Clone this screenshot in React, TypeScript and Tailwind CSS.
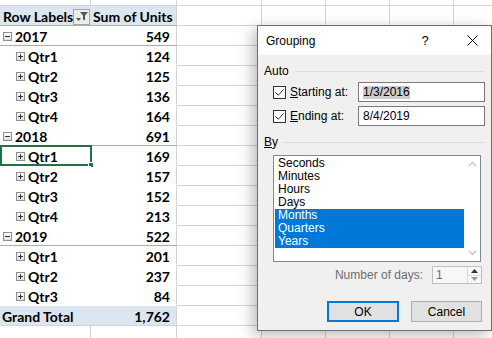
import React from "react";

type Kind = "header" | "year" | "qtr" | "total";

const pivot: { kind: Kind; label: string; value: string; selected?: boolean }[] = [
  { kind: "header", label: "Row Labels", value: "Sum of Units" },
  { kind: "year", label: "2017", value: "549" },
  { kind: "qtr", label: "Qtr1", value: "124" },
  { kind: "qtr", label: "Qtr2", value: "125" },
  { kind: "qtr", label: "Qtr3", value: "136" },
  { kind: "qtr", label: "Qtr4", value: "164" },
  { kind: "year", label: "2018", value: "691" },
  { kind: "qtr", label: "Qtr1", value: "169", selected: true },
  { kind: "qtr", label: "Qtr2", value: "157" },
  { kind: "qtr", label: "Qtr3", value: "152" },
  { kind: "qtr", label: "Qtr4", value: "213" },
  { kind: "year", label: "2019", value: "522" },
  { kind: "qtr", label: "Qtr1", value: "201" },
  { kind: "qtr", label: "Qtr2", value: "237" },
  { kind: "qtr", label: "Qtr3", value: "84" },
  { kind: "total", label: "Grand Total", value: "1,762" },
];

const units = ["Seconds", "Minutes", "Hours", "Days", "Months", "Quarters", "Years"];

function Expander({ open }: { open: boolean }) {
  return (
    <span className="relative flex w-[9px] h-[9px] shrink-0 items-center justify-center border border-[#8f8f8f] bg-linear-to-b from-white to-[#dedede]">
      <span className="absolute w-[5px] h-px bg-[#333]" />
      {!open && <span className="absolute w-px h-[5px] bg-[#333]" />}
    </span>
  );
}

function RestCells() {
  return (
    <>
      <div className="w-[85px] shrink-0 border-r border-b border-[#d4d4d4]" />
      <div className="w-[64px] shrink-0 border-r border-b border-[#d4d4d4]" />
      <div className="w-[64px] shrink-0 border-r border-b border-[#d4d4d4]" />
      <div className="w-[64px] shrink-0 border-r border-b border-[#d4d4d4]" />
      <div className="w-[64px] shrink-0 border-r border-b border-[#d4d4d4]" />
    </>
  );
}

function BlankRow({ h }: { h: string }) {
  return (
    <div className={`flex ${h}`}>
      <div className="w-[91px] shrink-0 border-r border-b border-[#d4d4d4]" />
      <div className="w-[86px] shrink-0 border-r border-b border-[#d4d4d4]" />
      <RestCells />
    </div>
  );
}

function FilterButton() {
  return (
    <span className="ml-auto mr-[1px] flex w-[17px] h-[16px] items-center justify-center border border-[#a5a5a5] bg-[#ececec]">
      <svg width="13" height="11" viewBox="0 0 13 11">
        <path d="M1 7h5l-2.5 3z" fill="#555" />
        <path d="M5 1h8l-3 3.5v5l-2-1v-4z" fill="#555" />
      </svg>
    </span>
  );
}

function PivotRow({ kind, label, value, selected }: { kind: Kind; label: string; value: string; selected?: boolean }) {
  const bottom =
    kind === "header" || kind === "year"
      ? "border-b-[#95b3d7]"
      : kind === "total"
      ? "border-b-[#d4d4d4]"
      : "border-b-white";
  const bg = kind === "header" || kind === "total" ? "bg-[#dce6f1]" : "bg-white";
  return (
    <div className="flex h-[20px]">
      <div className={`relative w-[91px] shrink-0 flex items-center border-b pt-[2px] ${bottom} ${bg}`}>
        {kind === "header" && (
          <>
            <span className="pl-[3px] whitespace-nowrap">{label}</span>
            <FilterButton />
          </>
        )}
        {kind === "year" && (
          <>
            <span className="ml-[3px]"><Expander open /></span>
            <span className="pl-[3px]">{label}</span>
          </>
        )}
        {kind === "qtr" && (
          <>
            <span className="ml-[16px]"><Expander open={false} /></span>
            <span className="pl-[3px]">{label}</span>
          </>
        )}
        {kind === "total" && <span className="pl-[2px] whitespace-nowrap">{label}</span>}
        {selected && (
          <div className="absolute -top-px left-0 -right-px -bottom-px border-2 border-[#217346]">
            <div className="absolute -right-[4px] -bottom-[4px] w-[6px] h-[6px] bg-[#217346] border border-white" />
          </div>
        )}
      </div>
      <div
        className={`w-[86px] shrink-0 flex items-center whitespace-nowrap pt-[2px] border-b border-r border-r-[#d4d4d4] ${bottom} ${bg} ${
          kind === "header" ? "pl-[2px]" : "justify-end pr-[6px]"
        }`}
      >
        {value}
      </div>
      <RestCells />
    </div>
  );
}

function Checkbox() {
  return (
    <span className="flex w-[13px] h-[13px] shrink-0 items-center justify-center border border-[#333] bg-white">
      <svg width="11" height="11" viewBox="0 0 11 11">
        <path d="M1.5 5.5l2.8 2.8L9.5 2.5" fill="none" stroke="#333" strokeWidth="1" />
      </svg>
    </span>
  );
}

function GroupingDialog() {
  return (
    <div
      className="absolute left-[257px] top-[25px] w-[235px] h-[306px] flex flex-col border border-[#6f6f6f] bg-[#f0f0f0] shadow-[-4px_4px_14px_rgba(0,0,0,0.28)] text-[12px] text-black"
      style={{ fontFamily: '"Liberation Sans", Arial, sans-serif' }}
    >
      <div className="h-[29px] shrink-0 flex items-center bg-white pl-[8px]">
        <span>Grouping</span>
        <span className="ml-[106px] text-[13px]">?</span>
        <svg className="ml-[38px]" width="11" height="11" viewBox="0 0 11 11">
          <path d="M0.5 0.5l10 10M10.5 0.5l-10 10" stroke="#000" strokeWidth="1" />
        </svg>
      </div>

      <div className="flex flex-col px-[6px]">
        <div className="mt-[8px] h-[16px] flex items-center">
          <span>Auto</span>
          <span className="ml-[6px] flex-1 h-px bg-[#dcdcdc]" />
        </div>

        <div className="mt-[3px] h-[20px] flex items-center pl-[9px]">
          <Checkbox />
          <span className="ml-[4px]"><u>S</u>tarting at:</span>
          <div className="ml-auto w-[127px] h-[20px] flex items-center border border-[#7a7a7a] bg-white pl-[4px]">
            <span className="bg-[#cccccc] leading-[13px]">1/3/2016</span>
          </div>
        </div>

        <div className="mt-[4px] h-[20px] flex items-center pl-[9px]">
          <Checkbox />
          <span className="ml-[4px]"><u>E</u>nding at:</span>
          <div className="ml-auto w-[127px] h-[20px] flex items-center border border-[#7a7a7a] bg-white pl-[4px]">
            <span>8/4/2019</span>
          </div>
        </div>

        <div className="mt-[8px] h-[16px] flex items-center">
          <span><u>B</u>y</span>
          <span className="ml-[5px] flex-1 h-px bg-[#dcdcdc]" />
        </div>

        <div className="mt-[5px] ml-[9px] w-[208px] h-[107px] flex border border-[#828790] bg-white">
          <div className="flex-1 flex flex-col p-px">
            {units.map((u, i) => (
              <div
                key={u}
                className={`h-[13px] leading-[13px] pl-[3px] ${i >= 4 ? "bg-[#0078d7] text-white" : ""}`}
              >
                {u}
              </div>
            ))}
          </div>
          <div className="w-[15px] flex flex-col items-center justify-between py-[5px]">
            <svg width="9" height="6" viewBox="0 0 9 6">
              <path d="M1 5l3.5-3.5L8 5" fill="none" stroke="#c2c2c2" strokeWidth="1.3" />
            </svg>
            <svg width="9" height="6" viewBox="0 0 9 6">
              <path d="M1 1l3.5 3.5L8 1" fill="none" stroke="#c2c2c2" strokeWidth="1.3" />
            </svg>
          </div>
        </div>

        <div className="mt-[4px] h-[18px] flex items-center justify-end pr-[3px]">
          <span className="text-[#6d6d6d]">Number of days:</span>
          <div className="ml-[9px] w-[50px] h-[18px] flex border border-[#bfbfbf] bg-[#f7f7f7]">
            <span className="flex-1 pl-[3px] leading-[16px] text-[#6d6d6d]">1</span>
            <div className="w-[14px] flex flex-col border-l border-[#d9d9d9]">
              <div className="flex-1 flex items-center justify-center border-b border-[#d9d9d9]">
                <svg width="7" height="4" viewBox="0 0 7 4"><path d="M0 4h7L3.5 0z" fill="#333" /></svg>
              </div>
              <div className="flex-1 flex items-center justify-center">
                <svg width="7" height="4" viewBox="0 0 7 4"><path d="M0 0h7L3.5 4z" fill="#9a9a9a" /></svg>
              </div>
            </div>
          </div>
        </div>

        <div className="mt-[17px] flex justify-end gap-[12px] pr-[3px]">
          <button className="w-[72px] h-[21px] flex items-center justify-center border-2 border-[#0078d7] bg-[#e1e1e1]">
            OK
          </button>
          <button className="w-[71px] h-[21px] flex items-center justify-center border border-[#adadad] bg-[#e1e1e1]">
            Cancel
          </button>
        </div>
      </div>
    </div>
  );
}

export default function App() {
  return (
    <div className="relative w-[492px] h-[338px] overflow-hidden bg-white">
      <div
        className="flex flex-col font-bold text-[14px] text-black"
        style={{ fontFamily: "Lato, 'Liberation Sans', sans-serif" }}
      >
        <BlankRow h="h-[6px]" />
        {pivot.map((r, i) => (
          <PivotRow key={i} {...r} />
        ))}
        <BlankRow h="h-[20px]" />
      </div>
      <GroupingDialog />
    </div>
  );
}
